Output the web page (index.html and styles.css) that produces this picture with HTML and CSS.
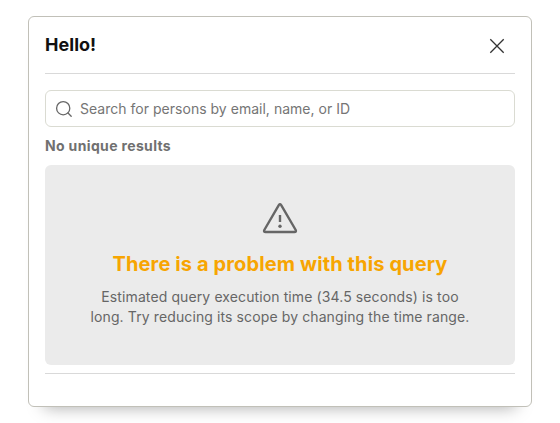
FILE: index.html
```html
<!DOCTYPE html>
<html lang="en">
<head>
<meta charset="utf-8">
<title>Hello!</title>
<link rel="stylesheet" href="styles.css">
</head>
<body>
<div class="modal">
  <header class="modal-header">
    <h3>Hello!</h3>
    <button class="close" aria-label="Close">
      <svg width="24" height="24" viewBox="0 0 24 24" fill="none" stroke="currentColor" stroke-width="1.3"><path d="M5.3 6.3l13.4 13.4M18.7 6.3L5.3 19.7"/></svg>
    </button>
  </header>
  <main class="modal-content">
    <label class="search">
      <svg width="20" height="20" viewBox="0 0 20 20" fill="none" stroke="currentColor" stroke-width="1.3" stroke-linecap="round"><circle cx="9.2" cy="9.2" r="6.6"/><path d="M14 14l3.2 3.2"/></svg>
      <input type="text" placeholder="Search for persons by email, name, or ID">
    </label>
    <div class="count">No unique results</div>
    <section class="empty">
      <svg class="warning" width="40" height="40" viewBox="0 0 40 40" fill="none" stroke="currentColor" stroke-width="2.4" stroke-linejoin="round" stroke-linecap="round"><path d="M18.8 6.1L4.3 31Q3.4 33 5.6 33H34.4Q36.6 33 35.7 31L21.2 6.1Q20 4.5 18.8 6.1Z"/><path stroke-linecap="butt" d="M20 16v7"/><circle cx="20" cy="27.2" r="1.7" fill="currentColor" stroke="none"/></svg>
      <h2>There is a problem with this query</h2>
      <p>Estimated query execution time (34.5 seconds) is too long. Try reducing its scope by changing the time range.</p>
    </section>
  </main>
  <footer class="modal-footer"></footer>
</div>
</body>
</html>
```

FILE: styles.css
```css
* { box-sizing: border-box; }
body {
  margin: 0;
  padding: 16px 28px;
  background: #fff;
  font-family: Inter, "Liberation Sans", sans-serif;
  font-size: 14px;
  line-height: 20px;
  color: #111;
  overflow: hidden;
}
h2, h3, p { margin: 0; }
.modal {
  height: 391px;
  padding: 0 16px;
  border: 1px solid #c1c0b8;
  border-radius: 6px;
  background: #fff;
  box-shadow: 0 16px 16px -16px rgba(0, 0, 0, 0.35);
}
.modal-header {
  display: flex;
  align-items: center;
  justify-content: space-between;
  height: 57px;
  border-bottom: 1px solid #d9d9d9;
}
h3 { font-size: 18px; line-height: 24px; font-weight: 700; letter-spacing: 0.03px; }
.close {
  display: flex;
  margin-right: 6px;
  padding: 0;
  border: 0;
  background: none;
  color: #333;
}
.modal-content { padding: 16px 0 8px; border-bottom: 1px solid #d9d9d9; }
.search {
  display: flex;
  align-items: center;
  gap: 6px;
  height: 37px;
  padding: 0 8px;
  border: 1px solid #dadbd2;
  border-radius: 6px;
  color: #666;
}
.search input {
  flex: 1;
  padding: 0;
  border: 0;
  outline: 0;
  font: inherit;
  letter-spacing: 0.02px;
  background: none;
}
.search input::placeholder { color: #757575; opacity: 1; }
.count { margin: 9px 0; font-weight: 700; letter-spacing: 0.35px; color: #707070; }
.empty {
  display: flex;
  flex-direction: column;
  align-items: center;
  height: 200px;
  padding: 34px 32px 0;
  border-radius: 6px;
  background: #ebebeb;
  color: #666;
}
h2 { margin: 11px 0 9px; font-size: 20px; line-height: 28px; font-weight: 700; letter-spacing: 0.12px; color: #f7a501; }
.empty p { width: 384px; text-align: center; letter-spacing: 0.11px; }
```
